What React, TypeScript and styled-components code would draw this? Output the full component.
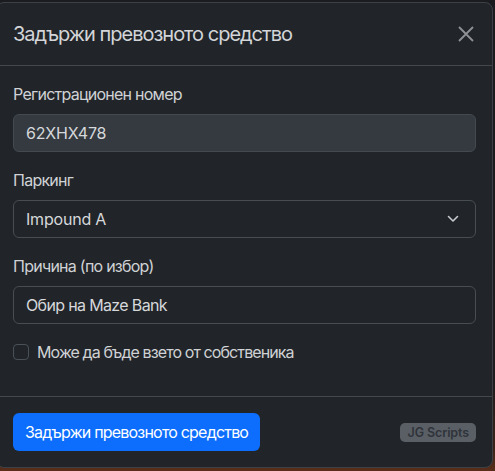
import React, { useState } from "react";
import styled, { createGlobalStyle } from "styled-components";

const GlobalStyle = createGlobalStyle`
  html, body {
    margin: 0;
    height: 100%;
    overflow: hidden;
    background: linear-gradient(180deg, #1b1c20 0%, #1d1c1f 80%, #3a2218 95%, #5a2e1a 100%);
    font-family: Inter, "Noto Sans", sans-serif;
  }
  * { box-sizing: border-box; }
`;

const Modal = styled.div`
  width: 497px;
  margin: 2px 0 0 -4px;
  background: #212529;
  border: 1px solid #3d4146;
  border-radius: 8px;
  color: #dee2e6;
  overflow: hidden;
`;

const Header = styled.div`
  display: flex;
  align-items: center;
  justify-content: space-between;
  padding: 16px;
  border-bottom: 1px solid #44484d;
`;

const Title = styled.h5`
  margin: 0;
  font-size: 20px;
  font-weight: 400;
  line-height: 30px;
  color: #d3d5d8;
  letter-spacing: -1px;
`;

const CloseButton = styled.button`
  width: 24px;
  height: 24px;
  padding: 0;
  border: 0;
  background: transparent;
  display: flex;
  align-items: center;
  justify-content: center;
  margin-right: -2px;
  cursor: pointer;
`;

const Body = styled.div`
  padding: 16px;
  display: flex;
  flex-direction: column;
  gap: 16px;
`;

const Group = styled.div`
  display: flex;
  flex-direction: column;
  gap: 8px;
`;

const Label = styled.label`
  font-size: 16px;
  line-height: 24px;
  color: #d0d2d5;
  letter-spacing: -0.75px;
`;

const Field = styled.div<{ $filled?: boolean; $tight?: boolean }>`
  position: relative;
  height: 38px;
  display: flex;
  align-items: center;
  padding: 0 12px;
  border: 1px solid ${(p) => (p.$filled ? "#44494f" : "#484d53")};
  border-radius: 6px;
  background: ${(p) => (p.$filled ? "#343a40" : "#212529")};
  font-size: 16px;
  color: #d6d8db;
  letter-spacing: ${(p) => (p.$tight ? "-0.65px" : "-0.2px")};
`;

const Chevron = styled.svg`
  position: absolute;
  right: 16px;
  top: 50%;
  transform: translateY(-50%);
`;

const CheckRow = styled.label`
  display: flex;
  align-items: center;
  gap: 8px;
  font-size: 16px;
  line-height: 24px;
  color: #d0d2d5;
  letter-spacing: -0.9px;
  margin-bottom: 16px;
  cursor: pointer;
`;

const Box = styled.span<{ $on: boolean }>`
  width: 16px;
  height: 16px;
  border: 1px solid #495057;
  border-radius: 4px;
  background: ${(p) => (p.$on ? "#0d6efd" : "#212529")};
`;

const Footer = styled.div`
  display: flex;
  align-items: center;
  justify-content: space-between;
  padding: 12px;
  border-top: 1px solid #44484d;
`;

const PrimaryButton = styled.button`
  margin: 4px;
  height: 38px;
  padding: 0 12px;
  border: 0;
  border-radius: 6px;
  background: #0d6efd;
  color: #fff;
  font-family: Inter, "Noto Sans", sans-serif;
  font-size: 16px;
  letter-spacing: -0.8px;
  cursor: pointer;
`;

const Badge = styled.span`
  margin: 4px;
  padding: 2px 7px;
  border-radius: 5px;
  background: #5a5f66;
  color: #30343a;
  font-size: 12.5px;
  font-weight: 600;
  line-height: 15px;
  letter-spacing: -0.1px;
`;

const App = () => {
  const [owner, setOwner] = useState(false);

  return (
    <>
      <GlobalStyle />
      <Modal>
        <Header>
          <Title>Задържи превозното средство</Title>
          <CloseButton aria-label="close">
            <svg width="16" height="16" viewBox="0 0 16 16">
              <path d="M1 1L15 15M15 1L1 15" stroke="#8f9194" strokeWidth="1.8" />
            </svg>
          </CloseButton>
        </Header>
        <Body>
          <Group>
            <Label>Регистрационен номер</Label>
            <Field $filled>62XHX478</Field>
          </Group>
          <Group>
            <Label>Паркинг</Label>
            <Field>
              Impound A
              <Chevron width="12" height="8" viewBox="0 0 12 8">
                <path d="M1.5 1.5L6 6L10.5 1.5" fill="none" stroke="#c8cacd" strokeWidth="1.6" strokeLinecap="round" strokeLinejoin="round" />
              </Chevron>
            </Field>
          </Group>
          <Group>
            <Label>Причина (по избор)</Label>
            <Field $tight>Обир на Maze Bank</Field>
          </Group>
          <CheckRow onClick={() => setOwner(!owner)}>
            <Box $on={owner} />
            Може да бъде взето от собственика
          </CheckRow>
        </Body>
        <Footer>
          <PrimaryButton>Задържи превозното средство</PrimaryButton>
          <Badge>JG Scripts</Badge>
        </Footer>
      </Modal>
    </>
  );
};

export default App;
